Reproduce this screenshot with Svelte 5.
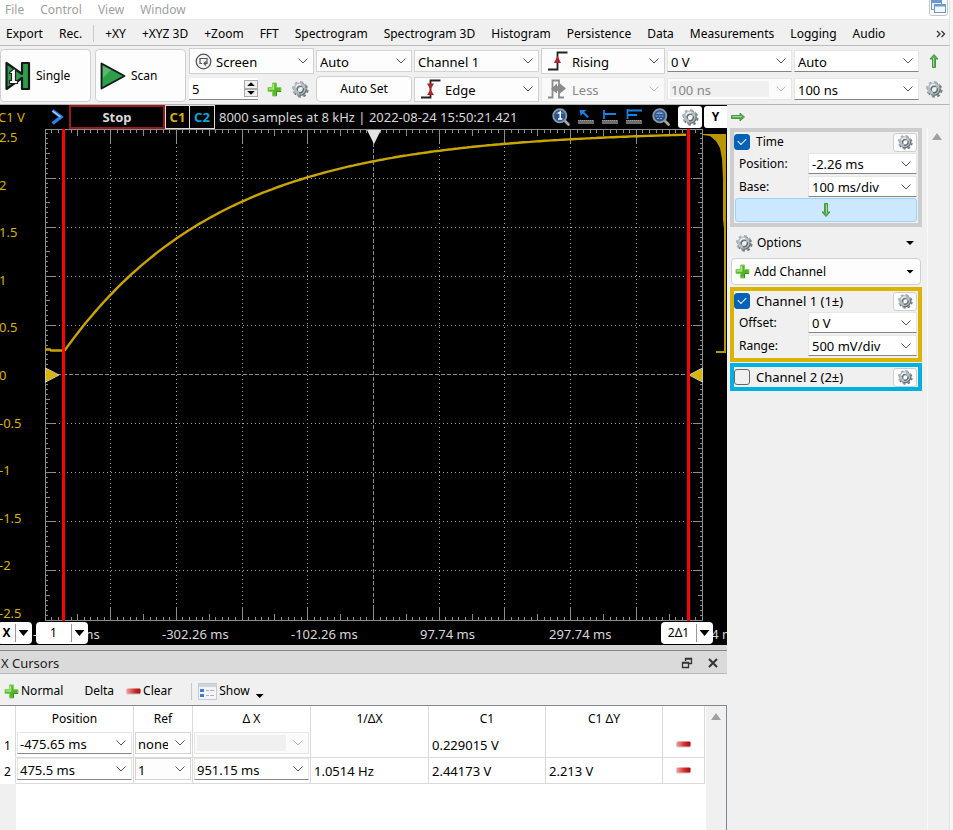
<script>
  const menus = ['File', 'Control', 'View', 'Window'];
  const views = ['+XY', '+XYZ 3D', '+Zoom', 'FFT', 'Spectrogram', 'Spectrogram 3D', 'Histogram', 'Persistence', 'Data', 'Measurements', 'Logging', 'Audio'];
  const volts = ['2.5', '2', '1.5', '1', '0.5', '0', '-0.5', '-1', '-1.5', '-2', '-2.5'];
  const times = ['-502.26 ms', '-302.26 ms', '-102.26 ms', '97.74 ms', '297.74 ms', '497.74 ms'];
  const cursors = [
    { n: 1, pos: '-475.65 ms', ref: 'none', dx: '', inv: '', c1: '0.229015 V', dy: '' },
    { n: 2, pos: '475.5 ms', ref: '1', dx: '951.15 ms', inv: '1.0514 Hz', c1: '2.44173 V', dy: '2.213 V' }
  ];

  // plot area: ten divisions each way
  const W = 657;
  const H = 491;
  const divX = W / 10;
  const divY = H / 10;

  let ticks = '';
  for (let i = 1; i < 100; i++) {
    const x = Math.floor((i * divX) / 10) + 0.5;
    const y = Math.floor((i * divY) / 10) + 0.5;
    const lx = i % 10 === 0 ? 13 : i % 5 === 0 ? 6 : 3;
    const ly = i % 10 === 0 ? 9 : i % 5 === 0 ? 4 : 2;
    ticks += `M${x} 1v${lx}M${x} ${H}v${-lx}M1 ${y}h${ly}M${W} ${y}h${-ly}`;
  }
  let grid = '';
  for (let i = 1; i < 10; i++) {
    if (i === 5) continue;
    grid += `M${Math.floor(i * divX) + 0.5} 14V${H - 14}M10 ${Math.floor(i * divY) + 0.5}H${W - 10}`;
  }
  // capacitor charge curve
  let curve = 'M0 220.5H5L6 221.5H19';
  for (let x = 20; x <= 643; x += 3) {
    curve += `L${x} ${(1.5 + 221 * Math.exp(-(x - 19) / 157)).toFixed(1)}`;
  }
</script>

{#snippet gear(size = 18)}
  <svg width={size} height={size} viewBox="0 0 18 18" aria-hidden="true">
    <circle cx="9.8" cy="10" r="6.6" fill="none" stroke="#697276" stroke-width="2.200" stroke-dasharray="2.59 2.59" />
    <circle cx="8.800" cy="8.800" r="6.600" fill="none" stroke="#a3adb2" stroke-width="2.400" stroke-dasharray="2.59 2.59" />
    <circle cx="9.600" cy="9.700" r="4.400" fill="none" stroke="#687378" stroke-width="3.600" />
    <circle cx="8.600" cy="8.600" r="4.600" fill="none" stroke="#b4bec3" stroke-width="3" />
    <path d="M5 7.400A4.500 4.500 0 0 1 10 4.600" stroke="#edf2f4" stroke-width="1.400" fill="none" />
    <path d="M12.400 8.200A3.600 3.600 0 0 1 8 12.600" stroke="#5d686d" stroke-width="1.400" fill="none" />
  </svg>
{/snippet}

{#snippet plus()}
  <svg width="15" height="15" viewBox="0 0 15 15" aria-hidden="true">
    <path d="M5.500 1h4v4.500h4.500v4h-4.500v4.500h-4v-4.500H1v-4h4.500z" fill="#52b82b" stroke="#86cf5e" />
    <path d="M6.500 2v5H2" fill="none" stroke="#a9ea80" stroke-width="1.500" />
    <path d="M9.500 14v-4.500H14" fill="none" stroke="#3a8d1d" />
  </svg>
{/snippet}

{#snippet minus()}
  <svg width="15" height="7" viewBox="0 0 15 7" aria-hidden="true">
    <defs><linearGradient id="red"><stop offset="0" stop-color="#f2a0a0" /><stop offset=".6" stop-color="#cf2a2a" /><stop offset="1" stop-color="#a80f0f" /></linearGradient></defs>
    <rect x="0.500" y="1.500" width="14" height="5" rx="1" fill="#999" opacity=".5" />
    <rect x="0.500" y="0.500" width="14" height="5" rx="1" fill="url(#red)" />
  </svg>
{/snippet}

{#snippet arrow(turn)}
  <svg width="16" height="16" viewBox="0 0 16 16" aria-hidden="true">
    <g transform="rotate({turn} 8 8)">
      <path d="M1.500 6.500h8.500v-2.500l4.500 4-4.500 4v-2.500H1.500z" fill="#5cab50" stroke="#3f8f3c" stroke-width=".9" />
      <path d="M2.500 7.500h9" stroke="#a4d896" />
    </g>
  </svg>
{/snippet}

{#snippet edge(kind)}
  <svg width="21" height="20" viewBox="0 0 21 20" aria-hidden="true">
    {#if kind === 'less'}
      <path d="M1 18.500h4.500V1.500h6.500v17h5" fill="none" stroke="#8b8b8b" stroke-width="1.800" />
      <path d="M4 10l6-5.500v3l3-3 6 5-6 5-3-3v3z" fill="#8b8b8b" />
    {:else}
      <path d="M1 18.500h9.500V1.500h10" fill="none" stroke="#222" stroke-width="1.800" />
      {#if kind === 'rising'}
        <path d="M10.500 5l3.500 7h-7z" fill="#b5202a" />
      {:else}
        <path d="M10.500 10.500l3.500 5.500h-7zM10.500 10.500l3.500-6h-7z" fill="#b5202a" />
      {/if}
    {/if}
  </svg>
{/snippet}

{#snippet lens(one)}
  <svg width="18" height="18" viewBox="0 0 18 18" aria-hidden="true">
    <path d="M12.500 12.500l4 4" stroke="#a8a8a8" stroke-width="2.600" stroke-linecap="round" />
    <circle cx="7.800" cy="7.800" r="6.600" fill="#2c5590" stroke="#8d98a3" stroke-width="1.800" />
    <path d="M3.500 6a5 5 0 0 1 8.600 0z" fill="#5c88c0" />
    {#if one}
      <path d="M6.200 5.500l2-1.500v7M6 11h4.400" fill="none" stroke="#fff" stroke-width="1.500" />
    {:else}
      <path d="M3.500 8h8.600M5 10.500h6M5 5.500h6" stroke="#8fb4e0" stroke-dasharray="2 1" />
    {/if}
  </svg>
{/snippet}

{#snippet cursorIcon(kind)}
  <svg width="16" height="16" viewBox="0 0 16 16" aria-hidden="true">
    <rect y="11" width="16" height="4" fill="#6d6d6d" />
    <path d="M0 11.500h16" stroke="#999" stroke-dasharray="1 1" />
    {#if kind === 0}
      <path d="M1.500 1h7l-2.300 2 4.600 4.500-1.500 1.500-4.600-4.500-2 2.500z" fill="#1583e6" />
    {:else if kind === 1}
      <path d="M2 1v9M2 5h12" stroke="#1583e6" stroke-width="1.800" />
    {:else}
      <path d="M1.500 0v10M1 1.500h15M1 6h10" stroke="#1583e6" stroke-width="1.800" />
    {/if}
  </svg>
{/snippet}

{#snippet combo(label, value, cls = '', disabled = false)}
  <select class={cls} aria-label={label} {disabled}><option>{value}</option></select>
{/snippet}

<div class="app">
  <nav class="menubar" aria-label="Window menu">
    {#each menus as m}<button>{m}</button>{/each}
    <button class="restore" aria-label="Restore windows">
      <svg width="16" height="16" viewBox="0 0 16 16"><rect x="1.500" y="1.500" width="10" height="9" fill="#e8f1fc" stroke="#6a9ad0" /><path d="M1 3h11" stroke="#6a9ad0" stroke-width="2" /><rect x="4.500" y="5.500" width="11" height="8" fill="#f2f7fd" stroke="#6a9ad0" /><path d="M4 6.500h12" stroke="#6a9ad0" stroke-width="2" /></svg>
    </button>
  </nav>

  <nav class="tabs" aria-label="Views">
    <button>Export</button><button>Rec.</button>
    <span class="divider"></span>
    {#each views as v}<button>{v}</button>{/each}
    <button class="more" aria-label="More views">
      <svg width="10" height="8" viewBox="0 0 10 8"><path d="M1 1l3 3-3 3M5.500 1l3 3-3 3" fill="none" stroke="#333" stroke-width="1.300" /></svg>
    </button>
  </nav>

  <section class="controls" aria-label="Acquisition">
    <button class="run">
      <svg width="26" height="30" viewBox="0 0 26 30" aria-hidden="true">
        <path d="M1.500 2v26L17 17v11h7V2h-7v11z" fill="#2f9e4b" stroke="#15171a" stroke-width="2.200" stroke-linejoin="round" />
        <path d="M4.500 11.500l4-3.500h2v11.500h2v3H4.500v-3h2v-7h-2z" fill="#fff" stroke="#222" stroke-width="1.200" />
      </svg>
      Single
    </button>
    <button class="run">
      <svg width="26" height="30" viewBox="0 0 26 30" aria-hidden="true">
        <path d="M1.500 2.500v25L24.500 15z" fill="#2f9e4b" stroke="#15171a" stroke-width="1.800" stroke-linejoin="round" />
        <path d="M3 5v12l8-8z" fill="#6fc083" opacity=".7" />
      </svg>
      Scan
    </button>
    <div class="settings">
      <div class="pair">
        <div class="combo tall">
          <svg width="17" height="17" viewBox="0 0 17 17" aria-hidden="true"><circle cx="8.500" cy="8.500" r="7.300" fill="#f4f4f4" stroke="#555" stroke-width="1.300" /><path d="M7 10.500H5V5.500h7v5h-2.500M11 8.500l-2 2 2 2" fill="none" stroke="#555" stroke-width="1.200" /></svg>
          {@render combo('Mode', 'Screen', 'bare')}
        </div>
        <div class="buffer">
          <div class="spin">
            <input type="text" value="5" aria-label="Buffers" />
            <span class="steps">
              <button aria-label="Increase"><i class="up"></i></button>
              <button aria-label="Decrease"><i class="down"></i></button>
            </span>
          </div>
          <button class="tool" aria-label="Add buffer">{@render plus()}</button>
          <button class="tool" aria-label="Buffer options">{@render gear()}</button>
        </div>
      </div>
      <div class="pair">
        {@render combo('Trigger mode', 'Auto', 'frame')}
        <button class="autoset">Auto Set</button>
      </div>
      <div class="pair">
        {@render combo('Trigger source', 'Channel 1', 'frame')}
        <div class="combo">{@render edge('both')}{@render combo('Trigger type', 'Edge', 'bare')}</div>
      </div>
      <div class="pair">
        <div class="combo tall">{@render edge('rising')}{@render combo('Condition', 'Rising', 'bare')}</div>
        <div class="combo off">{@render edge('less')}{@render combo('Length condition', 'Less', 'bare', true)}</div>
      </div>
      <div class="pair">
        {@render combo('Level', '0 V', 'edit')}
        {@render combo('Length', '100 ns', 'edit', true)}
      </div>
      <div class="pair">
        {@render combo('Hysteresis', 'Auto', 'edit')}
        {@render combo('Holdoff', '100 ns', 'edit')}
      </div>
      <div class="pair icons">
        <button class="tool" aria-label="Collapse">{@render arrow(-90)}</button>
        <button class="tool" aria-label="Trigger options">{@render gear()}</button>
      </div>
    </div>
  </section>

  <div class="main">
    <div class="left">
      <section class="scope" aria-label="Scope">
        <header>
          <span class="unit">C1 V</span>
          <svg class="chev" width="13" height="16" viewBox="0 0 13 16" aria-hidden="true"><path d="M1.500 1.500l8.500 6.500-8.500 6.500" fill="none" stroke="#2e7ff0" stroke-width="3.400" /><path d="M1.500 2l8 6" stroke="#a9d0ff" stroke-width="1.400" /></svg>
          <button class="stop">Stop</button>
          <button class="ch one">C1</button>
          <button class="ch two">C2</button>
          <span class="status">8000 samples at 8 kHz | 2022-08-24 15:50:21.421</span>
          <span class="scopetools">
            <button aria-label="Zoom one">{@render lens(true)}</button>
            <button aria-label="Free cursor">{@render cursorIcon(0)}</button>
            <button aria-label="Single cursor">{@render cursorIcon(1)}</button>
            <button aria-label="Multi cursor">{@render cursorIcon(2)}</button>
            <button aria-label="Zoom fit">{@render lens(false)}</button>
          </span>
          <button class="white" aria-label="Plot options">{@render gear()}</button>
          <button class="white y">Y</button>
        </header>
        <div class="plot">
          <div class="volts">{#each volts as v}<span>{v}</span>{/each}</div>
          <svg class="graph" viewBox="0 0 658 492" preserveAspectRatio="none" role="img" aria-label="Channel 1 waveform">
            <g shape-rendering="crispEdges" fill="none" stroke="#8c8c8c">
              <path d="M.500 .500H657.500V491.500H.500z" />
              <path d={ticks} />
              <path d={grid} stroke-dasharray="1 3" stroke="#a0a0a0" />
              <path d="M328.500 14V478M12 245.500H645" stroke-dasharray="4 2" />
            </g>
            <path d={curve} fill="none" stroke="#c9a500" stroke-width="2.400" />
            <path d="M322 1h14l-7 14z" fill="#e4e4e4" />
            <path d="M.500 239v14l13.500-7z" fill="#dbb400" stroke="#c8c8c0" />
            <path d="M657.500 239v14l-13.500-7z" fill="#dbb400" stroke="#c8c8c0" />
            <path d="M18.500 0V492M643.500 0V492" stroke="#f00" stroke-width="3" shape-rendering="crispEdges" />
          </svg>
          <svg class="hist" viewBox="0 0 24 492" preserveAspectRatio="none" aria-hidden="true">
            <path d="M0 5H23V224H13V222H21V100L20 90V50L19 30 17 19 13 12 7 7 0 6z" fill="#b89700" />
          </svg>
        </div>
        <div class="times">{#each times as t}<span>{t}</span>{/each}</div>
        <div class="pill px"><button><b>X</b></button><button aria-label="X axis menu"><i class="down"></i></button></div>
        <div class="pill p1"><button>1</button><button aria-label="Cursor 1 menu"><i class="down"></i></button></div>
        <div class="pill p2"><button>2Δ1</button><button aria-label="Cursor 2 menu"><i class="down"></i></button></div>
      </section>

      <section class="cursors" aria-label="X Cursors">
        <h2>
          <span>X Cursors</span>
          <button aria-label="Float"><svg width="12" height="12" viewBox="0 0 12 12"><path d="M4.500 4V1.500h6v5H8M4 2h7" fill="none" stroke="#333" stroke-width="1.300" /><path d="M1.500 5.500h6v5h-6zM1 6h7" fill="none" stroke="#333" stroke-width="1.300" /></svg></button>
          <button aria-label="Close"><svg width="12" height="12" viewBox="0 0 12 12"><path d="M2 2l8 8M10 2l-8 8" stroke="#333" stroke-width="2" /></svg></button>
        </h2>
        <div class="bar">
          <button>{@render plus()}Normal</button>
          <button class="delta">Delta</button>
          <button>{@render minus()}Clear</button>
          <span class="divider"></span>
          <button>
            <svg width="19" height="17" viewBox="0 0 19 17" aria-hidden="true"><rect x=".500" y=".500" width="18" height="16" fill="#f3f5f8" stroke="#c6ccd4" /><rect x="1" y="1" width="17" height="3" fill="#cfd4da" /><rect x="2" y="6" width="4" height="3" fill="#3a7fd5" /><rect x="2" y="11" width="4" height="3" fill="#3a7fd5" /><path d="M8 7.500h3M12 7.500h4M8 12.500h3M12 12.500h4" stroke="#aab2bd" /></svg>
            Show<i class="down low"></i>
          </button>
        </div>
        <div class="data">
          <div class="rows">
            <table>
              <colgroup><col style:width="16px" /><col style:width="118px" /><col style:width="59px" /><col style:width="118px" /><col style:width="118px" /><col style:width="117px" /><col style:width="117px" /><col style:width="42px" /></colgroup>
              <thead><tr><th aria-label="Number"></th><th>Position</th><th>Ref</th><th>Δ X</th><th>1/ΔX</th><th>C1</th><th>C1 ΔY</th><th aria-label="Remove"></th></tr></thead>
              <tbody>
                {#each cursors as c}
                  <tr>
                    <th scope="row">{c.n}</th>
                    <td class="in">{@render combo('Position ' + c.n, c.pos, 'edit')}</td>
                    <td class="in">{@render combo('Reference ' + c.n, c.ref, 'frame')}</td>
                    <td class="in">{@render combo('Delta X ' + c.n, c.dx, 'edit', !c.dx)}</td>
                    <td>{c.inv}</td><td>{c.c1}</td><td>{c.dy}</td>
                    <td class="del"><button aria-label="Remove cursor {c.n}">{@render minus()}</button></td>
                  </tr>
                {/each}
              </tbody>
            </table>
            <div class="gutter"></div>
          </div>
          <div class="scroll"><i class="thumb"></i></div>
        </div>
      </section>
    </div>

    <aside>
      <header><button class="tool" aria-label="Hide panel">{@render arrow(0)}</button></header>
      <div class="side">
        <div class="groups">
          <fieldset class="time">
            <div class="head"><label><input type="checkbox" checked />Time</label><button class="mini" aria-label="Time options">{@render gear(16)}</button></div>
            <label class="field"><span>Position:</span>{@render combo('Position', '-2.26 ms', 'edit')}</label>
            <label class="field"><span>Base:</span>{@render combo('Base', '100 ms/div', 'edit')}</label>
            <button class="expand" aria-label="Expand">{@render arrow(90)}</button>
          </fieldset>
          <button class="wide">{@render gear()}<span>Options</span><i class="down"></i></button>
          <button class="wide add">{@render plus()}<span>Add Channel</span><i class="down"></i></button>
          <fieldset class="c1">
            <div class="head"><label><input type="checkbox" checked />Channel 1 (1±)</label><button class="mini" aria-label="Channel 1 options">{@render gear(16)}</button></div>
            <label class="field"><span>Offset:</span>{@render combo('Offset', '0 V', 'edit')}</label>
            <label class="field"><span>Range:</span>{@render combo('Range', '500 mV/div', 'edit')}</label>
          </fieldset>
          <fieldset class="c2">
            <div class="head"><label><input type="checkbox" />Channel 2 (2±)</label><button class="mini" aria-label="Channel 2 options">{@render gear(16)}</button></div>
          </fieldset>
        </div>
        <div class="scroll"><i class="thumb"></i></div>
      </div>
    </aside>
  </div>
</div>

<style>
  :global(body) { background: #f6f6f6; }
  .app {
    display: flex; flex-direction: column; box-sizing: border-box; min-height: 100vh; padding-right: 3px;
    font: 12px/16px "Noto Sans", "Open Sans", sans-serif; color: #000; overflow: hidden;
  }
  .app :global(*) { box-sizing: border-box; }
  .app > * { background: #f0f0f0; border-right: 1px solid #e2e2e2; }
  button, input, select { font: inherit; color: inherit; margin: 0; border-radius: 0; }
  button { padding: 0; border: 0; background: none; white-space: nowrap; }
  svg { display: block; flex: none; }

  .menubar { display: flex; gap: 16px; height: 20px; padding: 0 1px 0 5px; background: #fff; border-bottom: 1px solid #e9e9e9; color: #a0a0a0; }
  .restore { margin: -2px 0 0 auto; height: 18px; width: 19px; border: 1px solid #c4c4c4; border-radius: 3px; }
  .tabs { display: flex; align-items: center; gap: 16px; height: 26px; padding: 2px 3px 0 6px; border-bottom: 1px solid #bdbdbd; }
  .divider { width: 1px; height: 17px; background: #c8c8c8; }
  .tabs .divider { margin: 0 -5px; }
  .more { margin-left: auto; }

  .controls { display: flex; height: 59px; border-bottom: 1px solid #b4b4b4; }
  .run { display: flex; align-items: center; gap: 5px; width: 91px; height: 53px; margin: 3px 4px 0 0; padding: 0 0 0 4px; background: #fdfdfd; border: 1px solid #d0d0d0; border-radius: 4px; }
  .settings { flex: 1; display: grid; grid-template-columns: 125fr 96fr 125fr 124fr 125fr 125fr 28px; gap: 2px; margin-left: -1px; min-width: 0; }
  .pair { display: grid; grid-template-rows: 28px 28px; align-items: center; min-width: 0; padding-top: 1px; }
  select {
    --chevron: url("data:image/svg+xml,%3Csvg xmlns='http://www.w3.org/2000/svg' width='10' height='6'%3E%3Cpath d='M.5.5l4.500 4.500 4.500-4.500' fill='none' stroke='%23555'/%3E%3C/svg%3E");
    appearance: none; min-width: 0; width: 100%; height: 22px; padding: 1px 22px 0 3px; border: 1px solid #d4d4d4; outline: 0;
    background: var(--chevron) no-repeat right 5px center #fdfdfd;
  }
  select, .status, .times, .volts, .unit, .ch, .stop, h2, td, .c1 .head, .c2 .head { font-size: 13px; }
  select.edit { background-color: #fff; border-color: #e6e6e6; border-bottom-color: #868686; }
  select:disabled {
    --chevron: url("data:image/svg+xml,%3Csvg xmlns='http://www.w3.org/2000/svg' width='10' height='6'%3E%3Cpath d='M.5.5l4.500 4.500 4.500-4.500' fill='none' stroke='%23bbb'/%3E%3C/svg%3E");
    color: #888; opacity: 1; border-color: #e6e6e6;
  }
  select.edit:disabled { background: var(--chevron) no-repeat right 5px center, linear-gradient(#f0f0f0, #f0f0f0) no-repeat 2px 2px / calc(100% - 24px) calc(100% - 4px) #fbfbfb; }
  .combo { display: flex; align-items: center; height: 25px; padding-left: 5px; background: #fdfdfd; border: 1px solid #d0d0d0; }
  .combo.tall { height: 26px; }
  .combo.off { background: #f9f9f9; border-color: #e9e9e9; }
  select.bare { border: 0; background-color: transparent; height: 20px; padding-left: 4px; }
  .buffer { display: flex; align-items: center; gap: 9px; }
  .spin { display: flex; width: 69px; height: 22px; background: #fff; border-bottom: 1px solid #868686; font-size: 13px; }
  .spin input { flex: 1; min-width: 0; border: 0; padding: 0 3px; background: none; }
  .steps { width: 14px; display: flex; flex-direction: column; padding: 2px 0; }
  .steps button { flex: 1; border: 1px solid #aaa; background: #f0f0f0; display: grid; place-items: center; }
  i.down, i.up { width: 8px; height: 4px; background: #000; clip-path: polygon(0 0, 100% 0, 50% 100%); flex: none; }
  i.up { clip-path: polygon(50% 0, 100% 100%, 0 100%); }
  .autoset { height: 26px; background: #fdfdfd; border: 1px solid #d0d0d0; border-radius: 4px; }
  .icons { justify-items: center; padding-right: 2px; }

  .app > .main { display: flex; flex: 1; min-height: 0; }
  .left { flex: 1; min-width: 0; display: flex; flex-direction: column; }
  .scope { position: relative; display: flex; flex-direction: column; background: #000; flex: none; overflow: hidden; color: #d8d8d8; }
  .scope > header { display: flex; height: 24px; align-items: center; }
  .unit { width: 51px; margin-left: -2px; color: #d8b200; }
  .chev { margin: 0 5px 0 2px; }
  .stop { align-self: stretch; width: 96px; border: 2px solid #981b1f; font-weight: 700; }
  .ch { align-self: stretch; width: 25px; border: 1px solid #ddd; font-weight: 700; }
  .ch + .ch { border-left: 0; }
  .one { color: #d8b200; }
  .two { color: #00a8dc; }
  .status { margin-left: 4px; white-space: nowrap; }
  .scopetools { display: flex; align-items: center; gap: 8px; margin: 0 8px 0 auto; }
  .scopetools button:last-child { margin-left: 2px; }
  .white { width: 24px; height: 22px; background: #fff; border-radius: 3px; display: grid; place-items: center; color: #000; margin-right: 2px; }
  .white.y { font-weight: 700; width: 23px; margin: 0; border-radius: 3px 0 0 3px; }
  .plot { display: grid; grid-template-columns: 45px 1fr 24px; height: 492px; }
  .volts { display: flex; flex-direction: column; justify-content: space-between; color: #d8b200; margin-left: -1px; }
  .graph, .hist { width: 100%; height: 100%; }
  .times { display: grid; grid-template-columns: repeat(6, 1fr); width: calc(100% + 80px); padding: 1px 0 0 33px; height: 24px; align-items: center; white-space: nowrap; }
  .pill { position: absolute; bottom: 1px; height: 22px; display: flex; background: #fff; border-radius: 4px; color: #000; }
  .pill button:first-child { flex: 1; }
  .pill button:last-child { width: 17px; margin: 2px 0; padding-right: 1px; border-left: 1px solid #999; display: grid; place-items: center; }
  .pill i.down { width: 10px; height: 6px; }
  .px { left: -2px; width: 34px; }
  .p1 { left: 36px; width: 52px; }
  .p2 { right: 14px; width: 52px; }

  .cursors { flex: 1; display: flex; flex-direction: column; border-top: 5px solid #d6d6d6; }
  h2 { margin: 0; font-weight: 400; display: flex; align-items: center; gap: 14px; height: 24px; padding: 1px 8px 0 1px; background: #dadada; border: solid #b8b8b8; border-width: 1px 0; border-top-color: #888; color: #222; }
  h2 span { flex: 1; }
  .bar { display: flex; align-items: center; height: 32px; padding: 3px 0 0 4px; border-bottom: 1px solid #828790; }
  .bar button { display: flex; align-items: center; gap: 2px; }
  .delta { margin: 0 12px 0 21px; }
  .bar .divider { margin: 0 6px 0 19px; }
  .low { margin: 10px 0 0 4px; }
  .data { flex: 1; display: flex; background: #fff; border-right: 1px solid #828790; }
  .rows { flex: 1; display: flex; flex-direction: column; padding-right: 1px; }
  .gutter { flex: 1; width: 16px; background: #f0f0f0; }
  .data .scroll { width: 20px; background: #f0f0f0; }
  .scroll { display: flex; justify-content: center; }
  .thumb { width: 10px; height: 7px; margin-top: 7px; background: #a0a0a0; clip-path: polygon(50% 0, 100% 100%, 0 100%); }
  table { table-layout: fixed; width: 100%; border-collapse: separate; border-spacing: 0; }
  th, td { padding: 0 3px; height: 26px; font-weight: 400; border-right: 1px solid #dadada; white-space: nowrap; }
  td, tbody th { border-bottom: 1px solid #dadada; }
  tbody th { padding: 3px 0 0; border-bottom-color: #fff; }
  td.in { padding: 0 1px 3px; vertical-align: top; }
  td.in select { display: block; height: 22px; padding-left: 2px; }
  .del button { margin: 0 auto; display: block; }

  aside { width: 223px; flex: none; display: flex; flex-direction: column; margin-right: -1px; }
  aside header { height: 23px; padding: 4px 0 0 3px; }
  .side { flex: 1; display: flex; }
  .groups { flex: 1; padding: 0 5px 0 3px; display: flex; flex-direction: column; gap: 1px; min-width: 0; }
  .side .scroll { width: 23px; border-left: 1px solid #fafafa; padding-right: 4px; }
  .side .thumb { margin-top: 5px; }
  fieldset { margin: 0; min-width: 0; padding: 0 1px 1px; border: 4px solid #cdcdcd; display: flex; flex-direction: column; }
  .c1 { border-color: #dbb400; }
  .c2 { border-color: #00b0e0; padding-bottom: 0; }
  .head { display: flex; height: 20px; justify-content: space-between; align-items: center; }
  .head label { display: flex; align-items: center; gap: 6px; }
  input[type='checkbox'] { appearance: none; width: 16px; height: 16px; margin: 0 0 0 -1px; border: 1px solid #666; border-radius: 3px; display: grid; place-items: center; }
  input[type='checkbox']:checked { background: #0562b8; border-color: #0562b8; }
  input[type='checkbox']:checked::after { content: ''; width: 7px; height: 4px; border: solid #fff; border-width: 0 0 1px 1px; transform: rotate(-45deg); margin-top: -3px; }
  .mini { width: 24px; height: 19px; display: grid; place-items: center; background: #fcfcfc; border: 1px solid #cfcfcf; border-radius: 3px; }
  .field { display: grid; grid-template-columns: 69px 1fr; align-items: center; height: 23px; padding: 0 0 0 4px; }
  .field select { height: 21px; padding-left: 3px; }
  .expand { height: 24px; background: #cce8ff; border: 1px solid #99d1ff; border-radius: 3px; display: grid; place-items: center; }
  .wide { display: flex; align-items: center; gap: 4px; height: 28px; margin: 1px 1px 0; padding: 0 6px 0 3px; border: 1px solid transparent; border-radius: 4px; }
  .wide span { flex: 1; text-align: left; }
  .wide.add { height: 27px; margin-top: 0; margin-bottom: 1px; background: #fdfdfd; border-color: #d0d0d0; }
</style>
